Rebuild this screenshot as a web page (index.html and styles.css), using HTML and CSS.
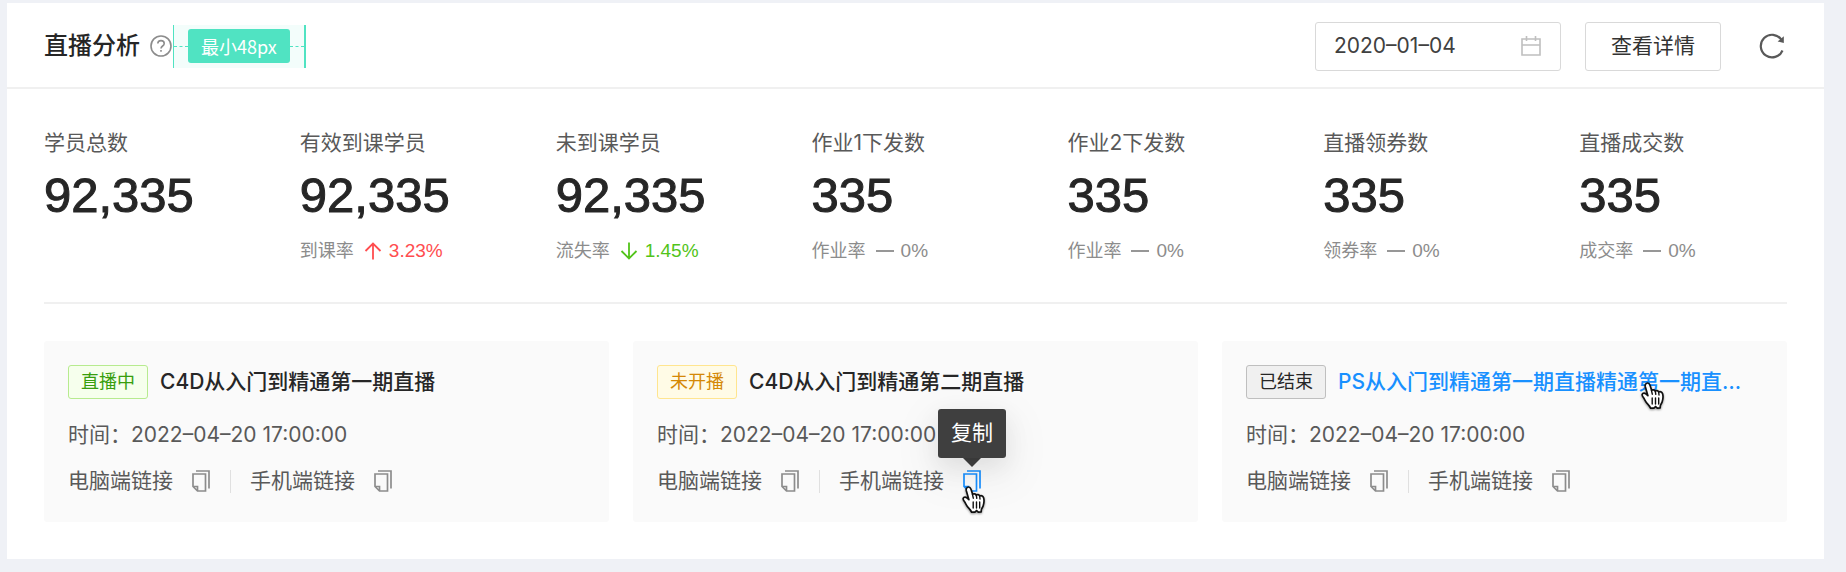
FILE: index.html
```html
<!DOCTYPE html>
<html lang="zh-CN">
<head>
<meta charset="utf-8">
<title>直播分析</title>
<meta name="viewport" content="width=device-width, initial-scale=1">
<link rel="stylesheet" href="styles.css">
</head>
<body>
<svg class="sprite" aria-hidden="true">
  <symbol id="i-copy" viewBox="0 0 18 22"><path d="M4 1h13v17.5M1 4h12.5v17H5.5L1 16.5zM1 16.5h4.5V21" fill="none" stroke="currentColor" stroke-width="1.7"/></symbol>
  <symbol id="i-hand" viewBox="0 0 26 30"><path d="M7.6 2c1.300 0 1.900.8 2.400 2.200l1.700 5.200c.6-.9 3-.9 3.600.7.900-.9 2.900-.6 3.400 1 1.300-.8 3.300-.3 3.900 1.600.7 2.300.4 5.500-.4 8-.5 1.700-1.700 2.800-1.900 4.300l-.1 2-2.900.1-1.700-1.600-1.700 1.700h-3.300c-.7-1.900-2.200-3.500-3.700-5.100-1.500-1.700-2.200-3.800-3.500-5.500-1-1.300-1.600-2.200-1.200-3.300.6-1.500 2.600-1.400 4-.2l1.700 1.600-2.600-9c-.5-1.900.6-3.700 2.300-3.700z" fill="#fff" stroke="#111" stroke-width="1.700" stroke-linejoin="round"/><path d="M11.400 9.200l.9 4M15.300 10.400l.5 3M18.700 11.500l.3 2.500M12.200 17v6M15.500 17v6M18.700 17v6" fill="none" stroke="#111" stroke-width="1.400" stroke-linecap="round"/></symbol>
</svg>
<main class="panel">
  <header class="panel-head">
    <h1 class="panel-title">直播分析</h1>
    <button class="icon-btn help" type="button" aria-label="帮助">
      <svg width="22" height="22" viewBox="0 0 22 22" fill="none" stroke="currentColor" stroke-width="1.600"><circle cx="11" cy="11" r="10"/><path d="M7.800 8.600c0-1.800 1.400-3 3.200-3s3.200 1.200 3.200 2.900c0 2.600-3.200 2.400-3.200 5"/><path d="M11 15v1.700"/></svg>
    </button>
    <div class="spacing-mark"><span class="spacing-tag">最小48px</span></div>
    <div class="tools">
      <label class="date-box">
        <input class="date-input" type="text" value="2020–01–04" aria-label="日期">
        <svg width="20" height="22" viewBox="0 0 20 22" fill="none" stroke="currentColor" stroke-width="1.600"><path d="M1 4h18v16H1zM1 10h18M5.500 1v5M14.500 1v5"/></svg>
      </label>
      <button class="btn" type="button">查看详情</button>
      <button class="icon-btn refresh" type="button" aria-label="刷新">
        <svg width="28" height="28" viewBox="0 0 28 28"><path d="M23.500 18.500A11.300 11.300 0 1 1 22.500 7.800" fill="none" stroke="currentColor" stroke-width="2.200"/><path d="M24.800 4.300v6.600l-6.200-1.400z" fill="currentColor"/></svg>
      </button>
    </div>
  </header>
  <div class="panel-body">
    <section class="stats">
      <div class="stat"><div class="stat-label">学员总数</div><div class="stat-value">92,335</div></div>
      <div class="stat"><div class="stat-label">有效到课学员</div><div class="stat-value">92,335</div>
        <div class="stat-rate">到课率<span class="trend up"><svg width="18" height="18" viewBox="0 0 18 18"><path d="M9 17.500V1.500M1.500 9L9 1.500 16.500 9"/></svg>3.23%</span></div></div>
      <div class="stat"><div class="stat-label">未到课学员</div><div class="stat-value">92,335</div>
        <div class="stat-rate">流失率<span class="trend down"><svg width="18" height="18" viewBox="0 0 18 18"><path d="M9 .5v16M1.500 9L9 16.500 16.500 9"/></svg>1.45%</span></div></div>
      <div class="stat"><div class="stat-label">作业1下发数</div><div class="stat-value">335</div>
        <div class="stat-rate">作业率<span class="trend"><svg width="18" height="18" viewBox="0 0 18 18"><path d="M0 9h18"/></svg>0%</span></div></div>
      <div class="stat"><div class="stat-label">作业2下发数</div><div class="stat-value">335</div>
        <div class="stat-rate">作业率<span class="trend"><svg width="18" height="18" viewBox="0 0 18 18"><path d="M0 9h18"/></svg>0%</span></div></div>
      <div class="stat"><div class="stat-label">直播领券数</div><div class="stat-value">335</div>
        <div class="stat-rate">领券率<span class="trend"><svg width="18" height="18" viewBox="0 0 18 18"><path d="M0 9h18"/></svg>0%</span></div></div>
      <div class="stat"><div class="stat-label">直播成交数</div><div class="stat-value">335</div>
        <div class="stat-rate">成交率<span class="trend"><svg width="18" height="18" viewBox="0 0 18 18"><path d="M0 9h18"/></svg>0%</span></div></div>
    </section>
    <section class="cards">
      <article class="card">
        <div class="card-head"><span class="tag live">直播中</span><a class="card-title" href="#">C4D从入门到精通第一期直播</a></div>
        <div class="card-time">时间：<time>2022–04–20 17:00:00</time></div>
        <div class="card-links">
          <span class="link-item">电脑端链接<button class="icon-btn copy" type="button" aria-label="复制电脑端链接"><svg width="18" height="22"><use href="#i-copy"/></svg></button></span>
          <span class="link-item">手机端链接<button class="icon-btn copy" type="button" aria-label="复制手机端链接"><svg width="18" height="22"><use href="#i-copy"/></svg></button></span>
        </div>
      </article>
      <article class="card">
        <div class="card-head"><span class="tag pending">未开播</span><a class="card-title" href="#">C4D从入门到精通第二期直播</a></div>
        <div class="card-time">时间：<time>2022–04–20 17:00:00</time></div>
        <div class="card-links">
          <span class="link-item">电脑端链接<button class="icon-btn copy" type="button" aria-label="复制电脑端链接"><svg width="18" height="22"><use href="#i-copy"/></svg></button></span>
          <span class="link-item">手机端链接<button class="icon-btn copy active" type="button" aria-label="复制手机端链接"><svg width="18" height="22"><use href="#i-copy"/></svg><span class="tooltip" role="tooltip">复制</span><svg class="hand" width="26" height="30"><use href="#i-hand"/></svg></button></span>
        </div>
      </article>
      <article class="card">
        <div class="card-head"><span class="tag ended">已结束</span><a class="card-title hover" href="#">PS从入门到精通第一期直播精通第一期直…</a><svg class="hand" width="26" height="30"><use href="#i-hand"/></svg></div>
        <div class="card-time">时间：<time>2022–04–20 17:00:00</time></div>
        <div class="card-links">
          <span class="link-item">电脑端链接<button class="icon-btn copy" type="button" aria-label="复制电脑端链接"><svg width="18" height="22"><use href="#i-copy"/></svg></button></span>
          <span class="link-item">手机端链接<button class="icon-btn copy" type="button" aria-label="复制手机端链接"><svg width="18" height="22"><use href="#i-copy"/></svg></button></span>
        </div>
      </article>
    </section>
  </div>
</main>
</body>
</html>
```
FILE: styles.css
```css
* { box-sizing: border-box; }
body {
  margin: 0;
  padding: 3px 22px 13px 7px;
  background: #eff1f6;
  color: #262626;
  font: 21px/32px Inter, "Noto Sans CJK SC", sans-serif;
}
button, input { font: inherit; color: inherit; }
svg { display: block; flex: none; }
.sprite { position: absolute; width: 0; height: 0; }
.panel { background: #fff; }
.panel-head {
  display: flex;
  align-items: center;
  height: 86px;
  padding: 2px 37px 0;
  border-bottom: 2px solid #f0f0f0;
}
.panel-title { margin: 0 10px 0 0; font-size: 24px; font-weight: 500; }
.icon-btn { display: block; padding: 0; border: 0; background: none; cursor: pointer; }
.help { color: #8c8c8c; }
.spacing-mark {
  display: flex;
  align-items: center;
  height: 43px;
  margin-left: 1px;
  border-left: 1px solid #50e3c2;
  border-right: 2px solid #50e3c2;
  background: #f3fdfb;
}
.spacing-mark::before, .spacing-mark::after {
  content: "";
  width: 14px;
  border-top: 1px dashed #50e3c2;
}
.spacing-tag {
  padding: 0 13px;
  border-radius: 3px;
  background: #50e3c2;
  color: #fff;
  font: 18px/34px "Noto Sans CJK SC", sans-serif;
}
.tools { display: flex; align-items: center; gap: 24px; margin-left: auto; }
.date-box {
  display: flex;
  align-items: center;
  width: 246px;
  height: 49px;
  padding: 0 19px 0 18px;
  border: 1px solid #d9d9d9;
  border-radius: 3px;
  color: #bfbfbf;
}
.date-input { flex: 1; min-width: 0; padding: 0; border: 0; outline: 0; background: none; color: #404040; }
.btn {
  height: 49px;
  padding: 0 25px;
  border: 1px solid #d9d9d9;
  border-radius: 3px;
  background: #fff;
  color: #333;
}
.refresh { margin-left: 14px; color: #595959; }
.panel-body { padding: 0 37px 37px; }
.stats {
  display: grid;
  grid-template-columns: repeat(7, 1fr);
  gap: 48px;
  padding: 38px 0 35px;
  border-bottom: 2px solid #f0f0f0;
}
.stat-label { color: #595959; white-space: nowrap; }
.stat-value { margin: 8px 0 12px; font: 49px/56px "Liberation Sans", sans-serif; -webkit-text-stroke: 1px #262626; }
.stat-rate { display: flex; align-items: center; color: #8c8c8c; font-size: 18px; white-space: nowrap; }
.trend { display: flex; align-items: center; gap: 7px; margin-left: 10px; font-family: "Liberation Sans", sans-serif; font-size: 19px; }
.trend path { fill: none; stroke: currentColor; stroke-width: 1.8; }
.up { color: #ff4d4f; }
.down { color: #52c41a; }
.cards { display: grid; grid-template-columns: repeat(3, minmax(0, 1fr)); gap: 24px; padding-top: 37px; }
.card { padding: 24px 24px 25px; border-radius: 3px; background: #fafafa; color: #595959; }
.card-head { position: relative; display: flex; align-items: center; gap: 12px; margin-bottom: 20px; }
.tag { flex: none; padding: 0 12px; border: 1px solid; border-radius: 3px; font-size: 18px; }
.live { border-color: #b7eb8f; background: #f6ffed; color: #389e0d; }
.pending { border-color: #ffe58f; background: #fffbe6; color: #d48806; }
.ended { border-color: #bfbfbf; background: #f0f0f0; color: #262626; }
.card-title { overflow: hidden; color: #262626; font-weight: 500; text-decoration: none; text-overflow: ellipsis; white-space: nowrap; }
.card-title.hover { color: #1890ff; }
.card-links { display: flex; margin-top: 14px; }
.link-item { display: flex; align-items: center; gap: 19px; }
.link-item + .link-item { margin-left: 20px; }
.link-item + .link-item::before { content: ""; height: 23px; border-left: 1px solid #e0e0e0; }
.copy { position: relative; color: #8c8c8c; }
.copy.active { color: #1890ff; }
.tooltip {
  position: absolute;
  bottom: 34px;
  left: 50%;
  padding: 8px 13px 9px;
  border-radius: 3px;
  background: rgba(0, 0, 0, 0.75);
  box-shadow: 0 14px 42px 12px rgba(0, 0, 0, 0.04), 0 9px 24px rgba(0, 0, 0, 0.08);
  color: #fff;
  white-space: nowrap;
  transform: translateX(-50%);
}
.tooltip::after {
  content: "";
  position: absolute;
  top: 100%;
  left: calc(50% - 9px);
  border: 9px solid transparent;
  border-bottom: 0;
  border-top-color: rgba(0, 0, 0, 0.75);
}
.hand { position: absolute; filter: drop-shadow(0 1px 1px rgba(0, 0, 0, 0.4)); }
.copy .hand { top: 15px; left: -2px; }
.card-head .hand { top: 16px; right: 97px; }
```
